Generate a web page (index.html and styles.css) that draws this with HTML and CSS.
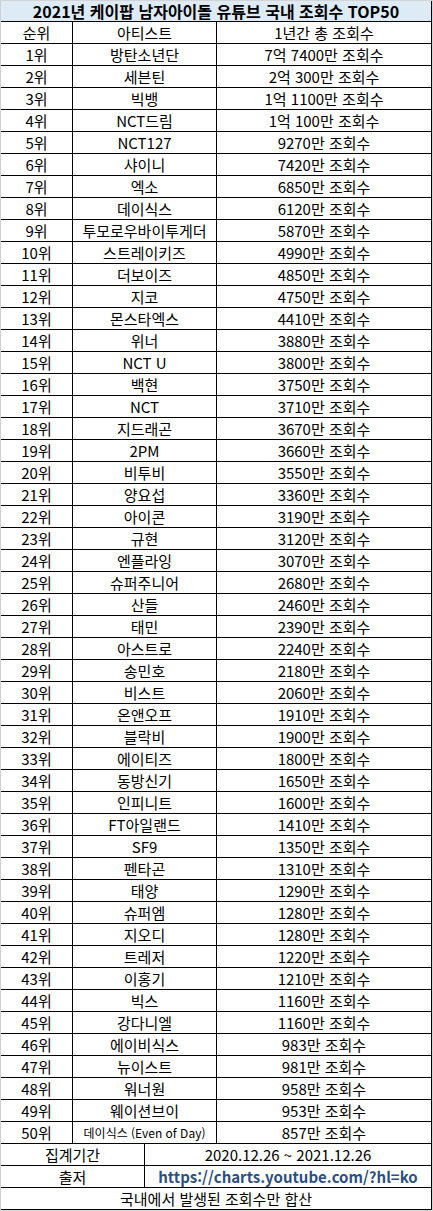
FILE: index.html
```html
<!DOCTYPE html>
<html lang="ko">
<head>
<meta charset="utf-8">
<title>2021년 케이팝 남자아이돌 유튜브 국내 조회수 TOP50</title>
<link rel="stylesheet" href="styles.css">
</head>
<body>
<div class="frame">
<div class="sheet">
<div class="c title">2021년 케이팝 남자아이돌 유튜브 국내 조회수 TOP50</div>
<div class="c r">순위</div><div class="c a">아티스트</div><div class="c v">1년간 총 조회수</div>
<div class="c r">1위</div><div class="c a">방탄소년단</div><div class="c v">7억 7400만 조회수</div>
<div class="c r">2위</div><div class="c a">세븐틴</div><div class="c v">2억 300만 조회수</div>
<div class="c r">3위</div><div class="c a">빅뱅</div><div class="c v">1억 1100만 조회수</div>
<div class="c r">4위</div><div class="c a">NCT드림</div><div class="c v">1억 100만 조회수</div>
<div class="c r">5위</div><div class="c a">NCT127</div><div class="c v">9270만 조회수</div>
<div class="c r">6위</div><div class="c a">샤이니</div><div class="c v">7420만 조회수</div>
<div class="c r">7위</div><div class="c a">엑소</div><div class="c v">6850만 조회수</div>
<div class="c r">8위</div><div class="c a">데이식스</div><div class="c v">6120만 조회수</div>
<div class="c r">9위</div><div class="c a">투모로우바이투게더</div><div class="c v">5870만 조회수</div>
<div class="c r">10위</div><div class="c a">스트레이키즈</div><div class="c v">4990만 조회수</div>
<div class="c r">11위</div><div class="c a">더보이즈</div><div class="c v">4850만 조회수</div>
<div class="c r">12위</div><div class="c a">지코</div><div class="c v">4750만 조회수</div>
<div class="c r">13위</div><div class="c a">몬스타엑스</div><div class="c v">4410만 조회수</div>
<div class="c r">14위</div><div class="c a">위너</div><div class="c v">3880만 조회수</div>
<div class="c r">15위</div><div class="c a">NCT U</div><div class="c v">3800만 조회수</div>
<div class="c r">16위</div><div class="c a">백현</div><div class="c v">3750만 조회수</div>
<div class="c r">17위</div><div class="c a">NCT</div><div class="c v">3710만 조회수</div>
<div class="c r">18위</div><div class="c a">지드래곤</div><div class="c v">3670만 조회수</div>
<div class="c r">19위</div><div class="c a">2PM</div><div class="c v">3660만 조회수</div>
<div class="c r">20위</div><div class="c a">비투비</div><div class="c v">3550만 조회수</div>
<div class="c r">21위</div><div class="c a">양요섭</div><div class="c v">3360만 조회수</div>
<div class="c r">22위</div><div class="c a">아이콘</div><div class="c v">3190만 조회수</div>
<div class="c r">23위</div><div class="c a">규현</div><div class="c v">3120만 조회수</div>
<div class="c r">24위</div><div class="c a">엔플라잉</div><div class="c v">3070만 조회수</div>
<div class="c r">25위</div><div class="c a">슈퍼주니어</div><div class="c v">2680만 조회수</div>
<div class="c r">26위</div><div class="c a">산들</div><div class="c v">2460만 조회수</div>
<div class="c r">27위</div><div class="c a">태민</div><div class="c v">2390만 조회수</div>
<div class="c r">28위</div><div class="c a">아스트로</div><div class="c v">2240만 조회수</div>
<div class="c r">29위</div><div class="c a">송민호</div><div class="c v">2180만 조회수</div>
<div class="c r">30위</div><div class="c a">비스트</div><div class="c v">2060만 조회수</div>
<div class="c r">31위</div><div class="c a">온앤오프</div><div class="c v">1910만 조회수</div>
<div class="c r">32위</div><div class="c a">블락비</div><div class="c v">1900만 조회수</div>
<div class="c r">33위</div><div class="c a">에이티즈</div><div class="c v">1800만 조회수</div>
<div class="c r">34위</div><div class="c a">동방신기</div><div class="c v">1650만 조회수</div>
<div class="c r">35위</div><div class="c a">인피니트</div><div class="c v">1600만 조회수</div>
<div class="c r">36위</div><div class="c a">FT아일랜드</div><div class="c v">1410만 조회수</div>
<div class="c r">37위</div><div class="c a">SF9</div><div class="c v">1350만 조회수</div>
<div class="c r">38위</div><div class="c a">펜타곤</div><div class="c v">1310만 조회수</div>
<div class="c r">39위</div><div class="c a">태양</div><div class="c v">1290만 조회수</div>
<div class="c r">40위</div><div class="c a">슈퍼엠</div><div class="c v">1280만 조회수</div>
<div class="c r">41위</div><div class="c a">지오디</div><div class="c v">1280만 조회수</div>
<div class="c r">42위</div><div class="c a">트레저</div><div class="c v">1220만 조회수</div>
<div class="c r">43위</div><div class="c a">이홍기</div><div class="c v">1210만 조회수</div>
<div class="c r">44위</div><div class="c a">빅스</div><div class="c v">1160만 조회수</div>
<div class="c r">45위</div><div class="c a">강다니엘</div><div class="c v">1160만 조회수</div>
<div class="c r">46위</div><div class="c a">에이비식스</div><div class="c v">983만 조회수</div>
<div class="c r">47위</div><div class="c a">뉴이스트</div><div class="c v">981만 조회수</div>
<div class="c r">48위</div><div class="c a">워너원</div><div class="c v">958만 조회수</div>
<div class="c r">49위</div><div class="c a">웨이션브이</div><div class="c v">953만 조회수</div>
<div class="c r">50위</div><div class="c a small">데이식스 (Even of Day)</div><div class="c v">857만 조회수</div>
<div class="c fl">집계기간</div><div class="c fv">2020.12.26 ~ 2021.12.26</div>
<div class="c fl">출저</div><div class="c fv link">https://charts.youtube.com/?hl=ko</div>
<div class="c note">국내에서 발생된 조회수만 합산</div>
</div>
</div>
</body>
</html>
```

FILE: styles.css
```css
html, body {
  margin: 0;
  padding: 0;
  background: #ffffff;
}

.frame {
  width: 431px;
  border: 1px solid #d4d4d4;
  border-left-color: #d0d0d0;
}

.sheet {
  display: grid;
  grid-template-columns: 71px 71px 71px 214px;
  grid-template-rows: 20px;
  grid-auto-rows: 21px;
  gap: 1px;
  background: #000000;
  padding: 0 1px 1px 0;
  font-family: "Noto Sans CJK KR", "Noto Sans", sans-serif;
  font-size: 15px;
  color: #000000;
}

.c {
  background: #ffffff;
  display: flex;
  align-items: center;
  justify-content: center;
  line-height: 20px;
  white-space: nowrap;
  padding-top: 1px;
  box-sizing: border-box;
}

.title {
  grid-column: 1 / 5;
  background: #ddebf7;
  font-weight: bold;
  font-size: 16px;
  line-height: 20px;
  padding-top: 0;
}

.r { grid-column: 1; }
.a { grid-column: 2 / 4; }
.v { grid-column: 4; }

.small {
  font-size: 12px;
}

.fl { grid-column: 1 / 3; }
.fv { grid-column: 3 / 5; }

.link {
  color: #2b4f81;
  font-weight: bold;
}

.note {
  grid-column: 1 / 5;
}
```
